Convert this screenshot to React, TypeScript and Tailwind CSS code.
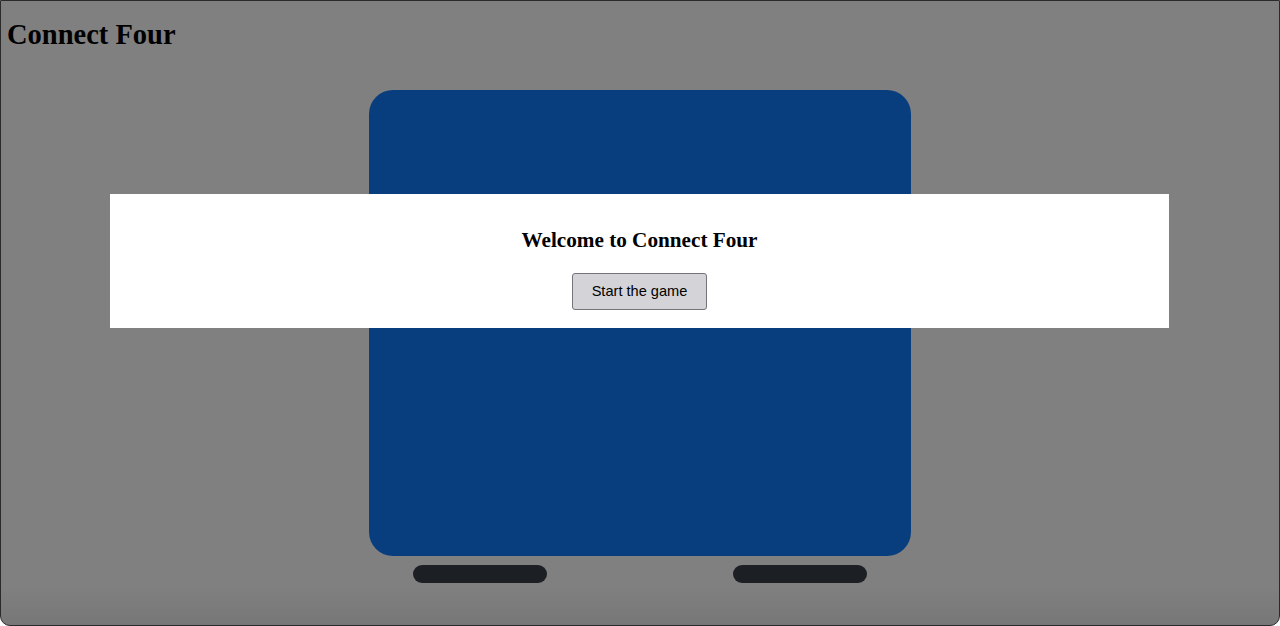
import React from "react";

export default function App() {
  return (
    <div className="relative w-[1280px] h-[626px] overflow-hidden bg-[#808080] border border-[#2a2a2a] rounded-b-[10px]" style={{ fontFamily: "'Liberation Serif', 'Times New Roman', serif" }}>
      <div className="absolute inset-x-0 bottom-0 h-[40px] bg-gradient-to-b from-transparent to-[#00000012] pointer-events-none" />
      <h1 className="m-0 pl-[6px] pt-[14px] text-[28.5px] leading-[40px] font-bold text-black">Connect Four</h1>
      <div className="flex flex-col items-center mt-[35px]">
        <div className="w-[542px] h-[466px] rounded-[24px] bg-[#083e7e]" />
        <div className="flex gap-[186px] mt-[9px]">
          <div className="w-[134px] h-[18px] rounded-full bg-[#1c1f23]" />
          <div className="w-[134px] h-[18px] rounded-full bg-[#1c1f23]" />
        </div>
      </div>
      <div className="absolute left-[109px] top-[193px] w-[1059px] h-[134px] bg-white flex flex-col items-center">
        <h2 className="m-0 mt-[32px] text-[21.2px] leading-[28px] font-bold text-black">Welcome to Connect Four</h2>
        <button className="mt-[19px] w-[135px] h-[37px] bg-[#d3d3d8] border border-[#74747a] rounded-[3px] text-[14.6px] text-black" style={{ fontFamily: "'Liberation Sans', Arial, sans-serif" }}>
          Start the game
        </button>
      </div>
    </div>
  );
}
